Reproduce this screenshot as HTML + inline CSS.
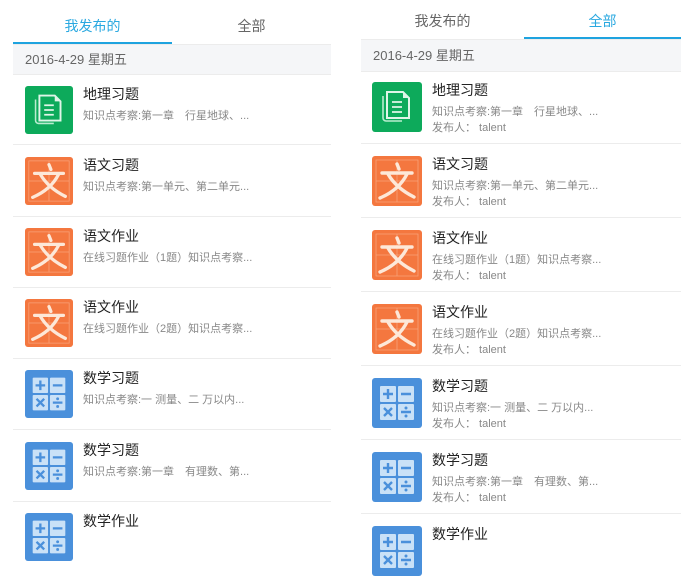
<!DOCTYPE html>
<html><head><meta charset="utf-8"><style>
*{margin:0;padding:0;box-sizing:border-box}
body{width:699px;height:554px;background:#fff;position:relative;overflow:hidden;font-family:"Liberation Sans","WenQuanYi Zen Hei","Noto Sans CJK SC",sans-serif}
.a{position:absolute;white-space:nowrap}
.tab{font-size:14px;color:#666;text-align:center}
.on{color:#29a8e0}
.hd{background:#f5f6f8;font-size:13px;color:#666;padding-left:12px;border-top:1px solid #ececec;border-bottom:1px solid #ececec}
.sep{height:1px;background:#ececec}
.t{font-size:14px;color:#222}
.s{font-size:11px;color:#888}
svg.i{position:absolute}
</style></head><body>
<svg width="0" height="0" style="position:absolute">
<defs>
<symbol id="g" viewBox="0 0 50 50"><rect width="50" height="50" rx="3" fill="#0daa5b"/>
<path d="M11 14v22a3 3 0 0 0 3 3h16" stroke="#b9ecd0" stroke-width="1.6" fill="none"/>
<path d="M15 10h16l6 6v20h-22z" stroke="#dff5e8" stroke-width="2" fill="none"/>
<path d="M31 10v6h6" fill="#dff5e8"/>
<path d="M20 20h10M20 25h10M20 30h10" stroke="#dff5e8" stroke-width="1.8"/></symbol>
<symbol id="o" viewBox="0 0 50 50"><rect width="50" height="50" rx="3" fill="#f4773f"/>
<path d="M4 4h42v42H4zM25 4v42M4 25h42" stroke="#f7a27a" stroke-width="0.8" fill="none"/>
<path d="M25 8l2 5M10 17h30M16 18q8 14 26 23M35 18q-8 16 -27 24" stroke="#fde8d8" stroke-width="3.4" fill="none" stroke-linecap="round"/></symbol>
<symbol id="b" viewBox="0 0 50 50"><rect width="50" height="50" rx="3" fill="#4a90db"/>
<rect x="8" y="8" width="16" height="16" rx="1" fill="#c9e1f7"/><rect x="26" y="8" width="16" height="16" rx="1" fill="#c9e1f7"/>
<rect x="8" y="26" width="16" height="16" rx="1" fill="#c9e1f7"/><rect x="26" y="26" width="16" height="16" rx="1" fill="#c9e1f7"/>
<path d="M16 11v10M11 16h10M29 16h10M12 30l8 8M20 30l-8 8M29 34h10" stroke="#4a90db" stroke-width="2.4"/>
<circle cx="34" cy="30" r="1.5" fill="#4a90db"/><circle cx="34" cy="38" r="1.5" fill="#4a90db"/></symbol>
</defs></svg>

<!-- LEFT -->
<div class="a tab on" style="left:13px;top:16px;width:159px">我发布的</div>
<div class="a tab" style="left:172px;top:16px;width:159px">全部</div>
<div class="a" style="left:13px;top:42px;width:159px;height:3px;background:#1ea3df"></div>
<div class="a hd" style="left:13px;top:44px;width:318px;height:31px;line-height:30px">2016-4-29 星期五</div>

<svg class="i" style="left:25px;top:86px" width="48" height="48"><use href="#g"/></svg>
<div class="a t" style="left:83px;top:84px">地理习题</div>
<div class="a s" style="left:83px;top:107px">知识点考察:第一章　行星地球、...</div>
<div class="a sep" style="left:13px;top:144px;width:318px"></div>

<svg class="i" style="left:25px;top:157px" width="48" height="48"><use href="#o"/></svg>
<div class="a t" style="left:83px;top:155px">语文习题</div>
<div class="a s" style="left:83px;top:178px">知识点考察:第一单元、第二单元...</div>
<div class="a sep" style="left:13px;top:216px;width:318px"></div>

<svg class="i" style="left:25px;top:228px" width="48" height="48"><use href="#o"/></svg>
<div class="a t" style="left:83px;top:226px">语文作业</div>
<div class="a s" style="left:83px;top:249px">在线习题作业（1题）知识点考察...</div>
<div class="a sep" style="left:13px;top:287px;width:318px"></div>

<svg class="i" style="left:25px;top:299px" width="48" height="48"><use href="#o"/></svg>
<div class="a t" style="left:83px;top:297px">语文作业</div>
<div class="a s" style="left:83px;top:320px">在线习题作业（2题）知识点考察...</div>
<div class="a sep" style="left:13px;top:358px;width:318px"></div>

<svg class="i" style="left:25px;top:370px" width="48" height="48"><use href="#b"/></svg>
<div class="a t" style="left:83px;top:368px">数学习题</div>
<div class="a s" style="left:83px;top:391px">知识点考察:一 测量、二 万以内...</div>
<div class="a sep" style="left:13px;top:429px;width:318px"></div>

<svg class="i" style="left:25px;top:442px" width="48" height="48"><use href="#b"/></svg>
<div class="a t" style="left:83px;top:440px">数学习题</div>
<div class="a s" style="left:83px;top:463px">知识点考察:第一章　有理数、第...</div>
<div class="a sep" style="left:13px;top:501px;width:318px"></div>

<svg class="i" style="left:25px;top:513px" width="48" height="48"><use href="#b"/></svg>
<div class="a t" style="left:83px;top:511px">数学作业</div>

<!-- RIGHT -->
<div class="a tab" style="left:361px;top:11px;width:163px">我发布的</div>
<div class="a tab on" style="left:524px;top:11px;width:157px">全部</div>
<div class="a" style="left:524px;top:37px;width:157px;height:3px;background:#1ea3df"></div>
<div class="a hd" style="left:361px;top:39px;width:320px;height:33px;line-height:32px">2016-4-29 星期五</div>

<svg class="i" style="left:372px;top:82px" width="50" height="50"><use href="#g"/></svg>
<div class="a t" style="left:432px;top:80px">地理习题</div>
<div class="a s" style="left:432px;top:103px">知识点考察:第一章　行星地球、...</div>
<div class="a s" style="left:432px;top:119px">发布人： talent</div>
<div class="a sep" style="left:361px;top:143px;width:320px"></div>

<svg class="i" style="left:372px;top:156px" width="50" height="50"><use href="#o"/></svg>
<div class="a t" style="left:432px;top:154px">语文习题</div>
<div class="a s" style="left:432px;top:177px">知识点考察:第一单元、第二单元...</div>
<div class="a s" style="left:432px;top:193px">发布人： talent</div>
<div class="a sep" style="left:361px;top:217px;width:320px"></div>

<svg class="i" style="left:372px;top:230px" width="50" height="50"><use href="#o"/></svg>
<div class="a t" style="left:432px;top:228px">语文作业</div>
<div class="a s" style="left:432px;top:251px">在线习题作业（1题）知识点考察...</div>
<div class="a s" style="left:432px;top:267px">发布人： talent</div>
<div class="a sep" style="left:361px;top:291px;width:320px"></div>

<svg class="i" style="left:372px;top:304px" width="50" height="50"><use href="#o"/></svg>
<div class="a t" style="left:432px;top:302px">语文作业</div>
<div class="a s" style="left:432px;top:325px">在线习题作业（2题）知识点考察...</div>
<div class="a s" style="left:432px;top:341px">发布人： talent</div>
<div class="a sep" style="left:361px;top:365px;width:320px"></div>

<svg class="i" style="left:372px;top:378px" width="50" height="50"><use href="#b"/></svg>
<div class="a t" style="left:432px;top:376px">数学习题</div>
<div class="a s" style="left:432px;top:399px">知识点考察:一 测量、二 万以内...</div>
<div class="a s" style="left:432px;top:415px">发布人： talent</div>
<div class="a sep" style="left:361px;top:439px;width:320px"></div>

<svg class="i" style="left:372px;top:452px" width="50" height="50"><use href="#b"/></svg>
<div class="a t" style="left:432px;top:450px">数学习题</div>
<div class="a s" style="left:432px;top:473px">知识点考察:第一章　有理数、第...</div>
<div class="a s" style="left:432px;top:489px">发布人： talent</div>
<div class="a sep" style="left:361px;top:513px;width:320px"></div>

<svg class="i" style="left:372px;top:526px" width="50" height="50"><use href="#b"/></svg>
<div class="a t" style="left:432px;top:524px">数学作业</div>
</body></html>
